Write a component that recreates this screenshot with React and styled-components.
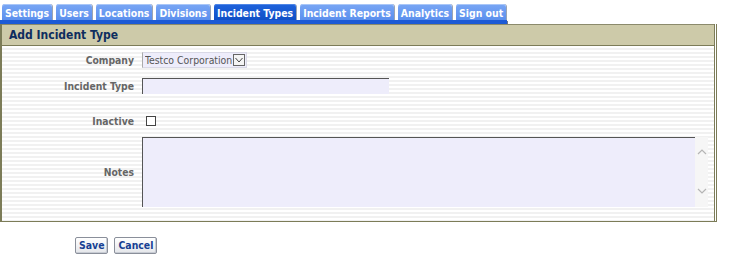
import React from "react";
import styled, { createGlobalStyle } from "styled-components";

const Global = createGlobalStyle`
  html, body { margin: 0; padding: 0; background: #fff; }
  body { font-family: "DejaVu Sans Condensed", "DejaVu Sans", Verdana, sans-serif; font-size: 11px; }
`;

const Page = styled.div`
  width: 734px;
  height: 259px;
  overflow: hidden;
`;

const TabStrip = styled.div`
  display: flex;
  align-items: flex-end;
  gap: 4px;
  padding: 4px 0 0 2px;
  height: 16px;
`;

const Tab = styled.div`
  height: 16px;
  box-sizing: border-box;
  padding: 2px 3px 0 3px;
  border-radius: 3px 3px 0 0;
  color: #fff;
  font-weight: bold;
  font-size: 10.4px;
  line-height: 14px;
  white-space: nowrap;
  background: ${p => (p.$active ? "linear-gradient(#1f63dc, #0f4fc6)" : "linear-gradient(#79a6f4, #5b8fee)")};
  box-shadow: 1px 0 0 #9aa4b4, inset 0 1px 0 ${p => (p.$active ? "#4f86e6" : "#a9c6f8")};
`;

const TabBar = styled.div`
  width: 507px;
  height: 4px;
  background: #1c5ad6;
  box-shadow: 1px 1px 0 #6a7590;
`;

const Panel = styled.div`
  width: 717px;
  box-sizing: border-box;
  border-left: 2px solid #7c7c58;
  border-right: 3px double #7c7c58;
  border-bottom: 1px solid #7c7c58;
`;

const PanelHeader = styled.div`
  height: 20px;
  background: #cdcaa9;
  border-top: 1px solid #8b8a6c;
  border-bottom: 1px solid #7c7c58;
  color: #0e2d5e;
  font-weight: bold;
  font-size: 12px;
  line-height: 20px;
  padding-left: 7px;
`;

const PanelBody = styled.div`
  padding: 6px 0 14px 0;
  background: repeating-linear-gradient(#ffffff 0 2px, #f1f1f1 2px 4px);
`;

const Row = styled.div`
  display: flex;
  align-items: ${p => p.$align || "center"};
  margin-top: ${p => p.$gap || 0}px;
`;

const Label = styled.label`
  width: 132px;
  flex: none;
  text-align: right;
  margin-right: 8px;
  color: #666;
  font-weight: bold;
  font-size: 10.3px;
  align-self: center;
`;

const SelectWrap = styled.div`
  display: flex;
  align-items: center;
  width: 105px;
  height: 16px;
  box-sizing: border-box;
  background: #eeedfb;
  border: 1px solid #d9d9e6;
  border-left-color: #aaa;
`;

const Select = styled.select`
  appearance: none;
  border: none;
  background: transparent;
  font-family: inherit;
  font-size: 10.4px;
  color: #555;
  padding: 0 0 0 2px;
  margin: 0;
  flex: 1;
  min-width: 0;
  height: 14px;
  outline: none;
`;

const Arrow = styled.span`
  width: 12px;
  height: 12px;
  flex: none;
  margin-right: 1px;
  box-sizing: border-box;
  border: 1px solid #666;
  background: #f4f4f4;
  display: flex;
  align-items: center;
  justify-content: center;
`;

const TextInput = styled.input`
  width: 247px;
  height: 16px;
  box-sizing: border-box;
  background: #eeedfb;
  border: none;
  border-top: 1px solid #555;
  border-left: 1px solid #555;
  margin: 0;
  padding: 0 2px;
  outline: none;
`;

const Check = styled.input`
  appearance: none;
  width: 10px;
  height: 10px;
  box-sizing: border-box;
  border: 1px solid #444;
  background: #fff;
  margin: 0 0 0 4px;
`;

const NotesBox = styled.div`
  display: flex;
  height: 70px;
`;

const NotesArea = styled.textarea`
  width: 553px;
  height: 70px;
  box-sizing: border-box;
  resize: none;
  background: #eeedfb;
  border: none;
  border-top: 1px solid #555;
  border-left: 1px solid #555;
  margin: 0;
  padding: 2px;
  outline: none;
  overflow: hidden;
  font-family: inherit;
`;

const ScrollBar = styled.div`
  width: 13px;
  height: 70px;
  background: #f6f6f6;
  display: flex;
  flex-direction: column;
  align-items: center;
  justify-content: space-between;
  padding: 12px 0 13px;
  box-sizing: border-box;
`;

const Buttons = styled.div`
  display: flex;
  gap: 6px;
  margin: 15px 0 0 75px;
`;

const Button = styled.button`
  height: 17px;
  box-sizing: border-box;
  padding: 0 3px;
  border: 1px solid #8a8f9a;
  border-radius: 2px;
  background: linear-gradient(#ffffff, #e4e6ea);
  box-shadow: inset -1px -1px 0 #c8ccd4;
  color: #173f93;
  font-family: inherit;
  font-weight: bold;
  font-size: 10.4px;
  line-height: 15px;
  cursor: pointer;
`;

const Chevron = ({ up }) => (
  <svg width="10" height="6" viewBox="0 0 10 6">
    <path d={up ? "M1 5 L5 1 L9 5" : "M1 1 L5 5 L9 1"} fill="none" stroke="#b5b5b5" strokeWidth="1.2" />
  </svg>
);

const tabs = ["Settings", "Users", "Locations", "Divisions", "Incident Types", "Incident Reports", "Analytics", "Sign out"];

export default function App() {
  return (
    <Page>
      <Global />
      <TabStrip>
        {tabs.map(t => (
          <Tab key={t} $active={t === "Incident Types"}>{t}</Tab>
        ))}
      </TabStrip>
      <TabBar />
      <Panel>
        <PanelHeader>Add Incident Type</PanelHeader>
        <PanelBody>
          <Row>
            <Label>Company</Label>
            <SelectWrap>
              <Select defaultValue="t">
                <option value="t">Testco Corporation</option>
              </Select>
              <Arrow>
                <svg width="8" height="6" viewBox="0 0 8 6">
                  <path d="M0.5 1 L4 5 L7.5 1" fill="none" stroke="#444" strokeWidth="1" />
                </svg>
              </Arrow>
            </SelectWrap>
          </Row>
          <Row $gap={10}>
            <Label>Incident Type</Label>
            <TextInput type="text" />
          </Row>
          <Row $gap={21}>
            <Label>Inactive</Label>
            <Check type="checkbox" />
          </Row>
          <Row $gap={10}>
            <Label>Notes</Label>
            <NotesBox>
              <NotesArea />
              <ScrollBar>
                <Chevron up />
                <Chevron />
              </ScrollBar>
            </NotesBox>
          </Row>
        </PanelBody>
      </Panel>
      <Buttons>
        <Button>Save</Button>
        <Button>Cancel</Button>
      </Buttons>
    </Page>
  );
}
